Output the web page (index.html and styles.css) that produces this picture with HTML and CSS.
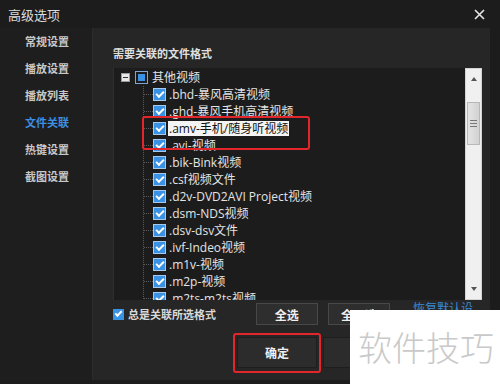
FILE: index.html
```html
<!DOCTYPE html>
<html lang="zh-CN">
<head>
    <meta charset="UTF-8">
    <title>高级选项</title>
    <link rel="stylesheet" href="styles.css">
</head>
<body>
    <div class="dialog">
        <div class="titleBar">
            <span class="title">高级选项</span>
            <svg class="close" width="11" height="11" viewBox="0 0 11 11">
                <path d="M1 1 L10 10 M10 1 L1 10" stroke="#e6e6e6" stroke-width="1.6" fill="none"/>
            </svg>
        </div>
        <div class="main">
            <ul class="sideNav">
                <li>常规设置</li>
                <li>播放设置</li>
                <li>播放列表</li>
                <li class="active">文件关联</li>
                <li>热键设置</li>
                <li>截图设置</li>
            </ul>
            <div class="panel">
                <div class="heading">需要关联的文件格式</div>
                <div class="listBox">
                    <div class="tree">
                        <div class="rootRow">
                            <span class="expander"></span>
                            <span class="cb partial"></span>
                            <span class="label">其他视频</span>
                        </div>
                        <ul class="children">
                            <li><span class="branch"></span><span class="cb"></span><span class="label">.bhd-暴风高清视频</span></li>
                            <li><span class="branch"></span><span class="cb"></span><span class="label">.ghd-暴风手机高清视频</span></li>
                            <li><span class="branch"></span><span class="cb"></span><span class="label selected">.amv-手机/随身听视频</span></li>
                            <li><span class="branch"></span><span class="cb"></span><span class="label">.avi-视频</span></li>
                            <li><span class="branch"></span><span class="cb"></span><span class="label">.bik-Bink视频</span></li>
                            <li><span class="branch"></span><span class="cb"></span><span class="label">.csf视频文件</span></li>
                            <li><span class="branch"></span><span class="cb"></span><span class="label">.d2v-DVD2AVI Project视频</span></li>
                            <li><span class="branch"></span><span class="cb"></span><span class="label">.dsm-NDS视频</span></li>
                            <li><span class="branch"></span><span class="cb"></span><span class="label">.dsv-dsv文件</span></li>
                            <li><span class="branch"></span><span class="cb"></span><span class="label">.ivf-Indeo视频</span></li>
                            <li><span class="branch"></span><span class="cb"></span><span class="label">.m1v-视频</span></li>
                            <li><span class="branch"></span><span class="cb"></span><span class="label">.m2p-视频</span></li>
                            <li><span class="branch"></span><span class="cb"></span><span class="label">.m2ts-m2ts视频</span></li>
                        </ul>
                    </div>
                    <div class="vScroll">
                        <div class="arrow up"></div>
                        <div class="track">
                            <div class="thumb"><span class="grip"></span></div>
                        </div>
                        <div class="arrow down"></div>
                    </div>
                </div>
                <div class="options">
                    <label class="always"><span class="cb small"></span>总是关联所选格式</label>
                    <button class="btn">全选</button>
                    <button class="btn">全不选</button>
                    <span class="link">恢复默认设置</span>
                </div>
                <div class="actions">
                    <button class="btn big">确定</button>
                    <button class="btn big">取消</button>
                </div>
            </div>
        </div>

        <!-- red marks drawn over the screenshot -->
        <div class="mark markRow"></div>
        <div class="mark markOk"></div>

        <div class="watermark">软件技巧</div>
    </div>
</body>
</html>
```

FILE: styles.css
```css
* {
    margin: 0;
    padding: 0;
    box-sizing: border-box;
}

body {
    font-family: "Noto Sans CJK SC", "Noto Sans", sans-serif;
    background: #1c1c1c;
}

ul {
    list-style: none;
}

.dialog {
    position: relative;
    width: 500px;
    height: 384px;
    background: #1c1c1c;
    overflow: hidden;
    display: flex;
    flex-direction: column;
}

.titleBar {
    height: 28px;
    display: flex;
    align-items: center;
    justify-content: space-between;
    padding: 0 15px 0 8px;
    color: #dcdcdc;
    font-size: 13px;
}

.main {
    height: 352px;
    display: flex;
}

.sideNav {
    width: 93px;
    background: #1e1e1e;
    border-right: 1px solid #2c2c2c;
    padding-left: 25px;
}

.sideNav li {
    height: 27px;
    line-height: 27px;
    font-size: 11px;
    font-weight: bold;
    color: #c8c8c8;
}

.sideNav li.active {
    color: #3d8fe2;
}

.panel {
    width: 397px;
    background: #262626;
    padding: 17px 8px 0 20px;
}

.heading {
    height: 16px;
    line-height: 16px;
    font-size: 11px;
    font-weight: bold;
    color: #e0e0e0;
}

.listBox {
    margin-top: 7px;
    height: 232px;
    display: flex;
    background: #1c1c1c;
    border-left: 1px solid #2e2e2e;
}

.tree {
    flex: 1;
    overflow: hidden;
    padding-top: 1px;
    font-family: "Open Sans", "Noto Sans CJK SC", sans-serif;
    font-size: 12px;
    color: #e4e4e4;
}

.rootRow {
    height: 17px;
    display: flex;
    align-items: center;
    padding-left: 7px;
}

.expander {
    width: 9px;
    height: 9px;
    background: #e8e8e8;
    border: 1px solid #9a9a9a;
    display: flex;
    align-items: center;
    justify-content: center;
    margin-right: 5px;
}

.expander::after {
    content: "";
    width: 5px;
    height: 1px;
    background: #333;
}

.children {
    margin-left: 29px;
    border-left: 1px dotted #5a5a5a;
}

.children li {
    height: 17px;
    display: flex;
    align-items: center;
}

.branch {
    width: 9px;
    border-top: 1px dotted #5a5a5a;
}

.cb {
    width: 13px;
    height: 13px;
    flex: none;
    background: #3a92e4;
    border: 1px solid #a9c9ec;
    display: flex;
    align-items: center;
    justify-content: center;
    margin-right: 2px;
}

.cb::after {
    content: "";
    width: 6px;
    height: 3px;
    border-left: 2px solid #fff;
    border-bottom: 2px solid #fff;
    transform: translate(0, -1px) rotate(-45deg);
}

.cb.partial {
    background: #1c1c1c;
    border-color: #7da6d6;
    margin-right: 3px;
}

.cb.partial::after {
    width: 7px;
    height: 7px;
    border: none;
    background: #3a92e4;
    transform: none;
}

.cb.small {
    width: 11px;
    height: 11px;
    margin-right: 4px;
    border-color: #3a92e4;
}

.cb.small::after {
    width: 5px;
    height: 2px;
}

.label {
    white-space: nowrap;
    line-height: 15px;
    padding: 0 1px;
}

.label.selected {
    background: #f4f4f4;
    color: #111;
}

.vScroll {
    width: 17px;
    background: #f0f0f0;
    border: 1px solid #d4d4d4;
    display: flex;
    flex-direction: column;
}

.arrow {
    height: 20px;
    display: flex;
    align-items: center;
    justify-content: center;
}

.arrow::after {
    content: "";
    border-left: 3px solid transparent;
    border-right: 3px solid transparent;
}

.arrow.up::after {
    border-bottom: 4px solid #555;
}

.arrow.down::after {
    border-top: 4px solid #555;
}

.track {
    flex: 1;
    padding-top: 13px;
}

.thumb {
    height: 43px;
    margin: 0 1px;
    background: linear-gradient(to right, #e4e4e4, #d2d2d2);
    border: 1px solid #b8b8b8;
    display: flex;
    align-items: center;
    justify-content: center;
}

.grip {
    width: 7px;
    height: 7px;
    border-top: 1px solid #777;
    border-bottom: 1px solid #777;
    display: flex;
    align-items: center;
}

.grip::after {
    content: "";
    width: 7px;
    height: 1px;
    background: #777;
}

.options {
    margin-top: 3px;
    height: 22px;
    display: flex;
    align-items: center;
}

.always {
    width: 149px;
    display: flex;
    align-items: center;
    font-size: 11px;
    font-weight: bold;
    color: #d8d8d8;
}

.btn {
    width: 65px;
    height: 22px;
    margin-right: 10px;
    background: #2e2e2e;
    border: 1px solid #484848;
    color: #f0f0f0;
    font-family: inherit;
    font-size: 12px;
    font-weight: bold;
}

.link {
    margin-left: 13px;
    margin-top: 4px;
    font-size: 12px;
    color: #3a8ad8;
}

.actions {
    margin-top: 12px;
    padding-left: 124px;
    display: flex;
}

.btn.big {
    width: 80px;
    height: 31px;
    margin-right: 6px;
    background: #2c2c2c;
    border-color: #1e1e1e;
}

.mark {
    position: absolute;
    border: 2.5px solid #e2262b;
    border-radius: 3px;
}

.markRow {
    left: 142px;
    top: 116px;
    width: 168px;
    height: 34px;
}

.markOk {
    left: 233px;
    top: 333px;
    width: 88px;
    height: 40px;
}

.watermark {
    position: absolute;
    left: 350px;
    top: 310px;
    width: 150px;
    height: 74px;
    background: #fff;
    color: #c9c9c9;
    font-size: 34px;
    font-weight: 300;
    line-height: 74px;
    padding-left: 8px;
}
```
